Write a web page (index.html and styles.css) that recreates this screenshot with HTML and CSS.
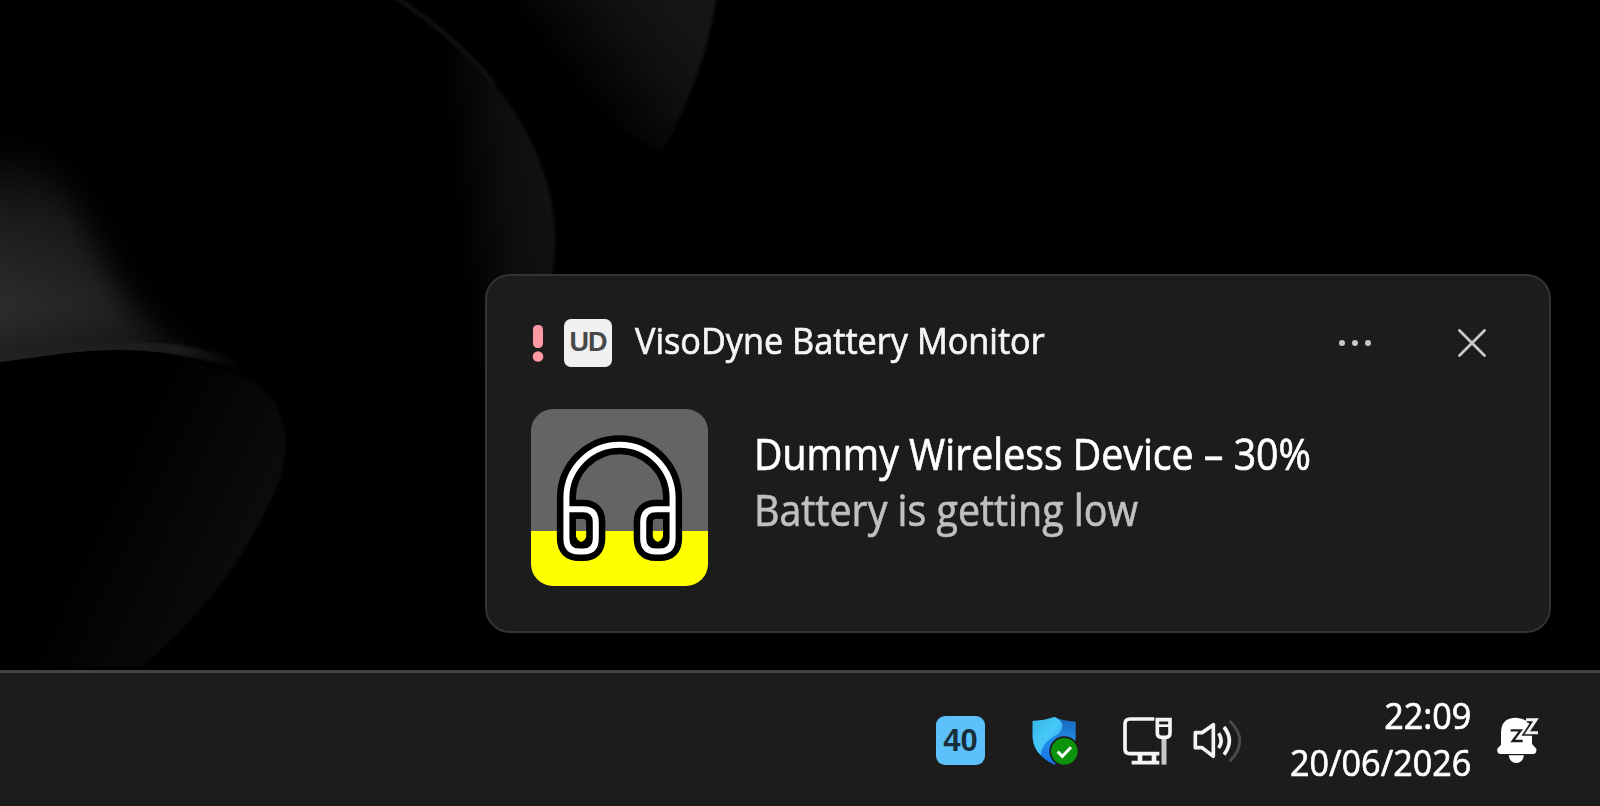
FILE: index.html
```html
<!DOCTYPE html>
<html lang="en">
<head>
<meta charset="utf-8">
<title>Desktop</title>
<link rel="stylesheet" href="styles.css">
</head>
<body>
<main class="desktop">
  <svg class="wallpaper" viewBox="0 0 1600 806" aria-hidden="true" color-interpolation-filters="sRGB">
    <defs>
      <linearGradient id="g1" gradientUnits="userSpaceOnUse" x1="455" y1="190" x2="556" y2="180">
        <stop offset="0" stop-color="#000"/><stop offset=".5" stop-color="#0d0d0d"/><stop offset="1" stop-color="#131313"/>
      </linearGradient>
      <linearGradient id="g2" gradientUnits="userSpaceOnUse" x1="600" y1="120" x2="700" y2="40">
        <stop offset="0" stop-color="#000"/><stop offset=".6" stop-color="#0f0f0f"/><stop offset="1" stop-color="#151515"/>
      </linearGradient>
      <linearGradient id="g3" gradientUnits="userSpaceOnUse" x1="20" y1="140" x2="30" y2="350">
        <stop offset="0" stop-color="#000"/><stop offset=".35" stop-color="#1b1b1b"/><stop offset=".83" stop-color="#2e2e2e"/><stop offset="1" stop-color="#1e1e1e"/>
      </linearGradient>
      <linearGradient id="shade" gradientUnits="userSpaceOnUse" x1="0" y1="0" x2="200" y2="0">
        <stop offset="0" stop-color="#000" stop-opacity="0"/><stop offset=".6" stop-color="#000" stop-opacity=".25"/><stop offset="1" stop-color="#000" stop-opacity=".4"/>
      </linearGradient>
      <linearGradient id="g4" gradientUnits="userSpaceOnUse" x1="110" y1="480" x2="255" y2="550">
        <stop offset="0" stop-color="#000"/><stop offset="1" stop-color="#0c0c0c"/>
      </linearGradient>
      <linearGradient id="g5" gradientUnits="userSpaceOnUse" x1="0" y1="0" x2="240" y2="0">
        <stop offset="0" stop-color="#222"/><stop offset=".75" stop-color="#1b1b1b"/><stop offset="1" stop-color="#000"/>
      </linearGradient>
      <filter id="b1" x="-30%" y="-30%" width="160%" height="160%"><feGaussianBlur stdDeviation="15"/></filter>
      <filter id="b2"><feGaussianBlur stdDeviation="1.5"/></filter>
      <clipPath id="c1"><path d="M0 0H320V410Q240 366 178 355Q127 346 66 353L0 362Z"/></clipPath>
    </defs>
    <path fill="url(#g2)" filter="url(#b2)" d="M510-5H717Q706 72 663 150Q600 135 510-5Z"/>
    <path fill="url(#g1)" filter="url(#b2)" d="M395-3Q454 35 495 85C535 135 556 190 555 243Q554 320 500 370H400Z"/>
    <path fill="none" stroke="#121212" stroke-width="4" filter="url(#b2)" d="M395-3Q454 35 495 85"/>
    <g clip-path="url(#c1)">
      <path fill="url(#g3)" filter="url(#b1)" d="M-60 120Q45 150 72 200T117 286Q150 335 205 366L150 400H-60Z"/>
      <path fill="url(#shade)" d="M0 100H320V400H0Z"/>
      <path fill="none" stroke="url(#g5)" stroke-width="10" filter="url(#b2)" d="M0 359L66 350Q127 342 178 350T240 370"/>
    </g>
    <path fill="url(#g4)" filter="url(#b2)" d="M0 367L66 358Q127 350 178 360Q255 372 275 403Q299 450 268 505Q230 590 143 666H0Z"/>
  </svg>

  <section class="stage">
    <article class="toast">
      <header class="toast-head">
        <svg class="alert" width="12" height="38" viewBox="0 0 12 38"><rect x="1" y="0" width="10" height="23" rx="4.5"/><circle cx="6" cy="31.5" r="5.3"/></svg>
        <span class="app-badge">UD</span>
        <span class="app-name"><span class="fit">VisoDyne Battery Monitor</span></span>
        <svg class="more" width="34" height="10" viewBox="0 0 34 10"><circle cx="4" cy="5" r="3"/><circle cx="17" cy="5" r="3"/><circle cx="30" cy="5" r="3"/></svg>
        <svg class="close" width="28" height="28" viewBox="0 0 28 28"><path d="M1.5 1.5L26.5 26.5M26.5 1.5L1.5 26.5"/></svg>
      </header>
      <div class="toast-body">
        <svg class="device" viewBox="0 0 530 530">
          <clipPath id="tile"><rect width="530" height="530" rx="66"/></clipPath>
          <g clip-path="url(#tile)"><path fill="#646464" d="M0 0H530V365H0Z"/><path fill="#ff0" d="M0 365H530V530H0Z"/></g>
          <g fill="none" stroke-linejoin="round">
            <path stroke="#000" stroke-width="57" d="M106 300V266A159 159 0 0 1 424 266V300M106 300H156Q194 300 194 338V388Q194 427 156 427H144Q106 427 106 388ZM424 300H374Q336 300 336 338V388Q336 427 374 427H386Q424 427 424 388Z"/>
            <path stroke="#fff" stroke-width="18" d="M106 300V266A159 159 0 0 1 424 266V300M106 300H156Q194 300 194 338V388Q194 427 156 427H144Q106 427 106 388ZM424 300H374Q336 300 336 338V388Q336 427 374 427H386Q424 427 424 388Z"/>
            <path stroke="#000" stroke-width="8" d="M130 325H155Q171 327 171 345V380Q164 400 150 402Q136 400 130 380ZM400 325H375Q359 327 359 345V380Q366 400 380 402Q394 400 400 380Z"/>
          </g>
        </svg>
        <div class="message">
          <p class="title"><span class="fit">Dummy Wireless Device – 30%</span></p>
          <p class="detail"><span class="fit">Battery is getting low</span></p>
        </div>
      </div>
    </article>
  </section>

  <footer class="taskbar">
    <span class="level">40</span>
    <svg class="shield" width="48" height="50" viewBox="360 72 144 150">
      <defs>
        <linearGradient id="s1" x1="0" y1="0" x2="1" y2="1"><stop offset="0" stop-color="#35b6e6"/><stop offset=".5" stop-color="#46c8f8"/><stop offset="1" stop-color="#2a9df0"/></linearGradient>
        <linearGradient id="s2" x1="0" y1="0" x2="0" y2="1"><stop offset="0" stop-color="#1668b8"/><stop offset=".5" stop-color="#2389e8"/><stop offset="1" stop-color="#1673e6"/></linearGradient>
      </defs>
      <path fill="url(#s2)" d="M368 90Q405 88 433 78Q461 90 497 92V140Q494 190 433 221Q372 192 368 140Z"/>
      <path fill="url(#s1)" d="M368 90Q405 88 433 78Q455 86 457 105Q456 126 425 141Q394 160 392 193Q370 170 368 140Z"/>
      <circle cx="463" cy="181" r="45" fill="#1c1c1c"/><circle cx="463" cy="181" r="40" fill="#0b930b"/>
      <path d="M443 182L457 196L483 169" fill="none" stroke="#fff" stroke-width="9"/>
    </svg>
    <svg class="network" width="50" height="52" viewBox="68 74 150 156" fill="none" stroke="#f4f4f4" stroke-width="11">
      <path d="M165 86H92Q77 86 77 101V176Q77 190 92 190H180M97 217H180"/><path stroke-width="14" d="M122 190V218M164 190V218"/>
      <path stroke="#c8c8c8" stroke-width="15" d="M194 142V223"/>
      <path d="M174 88H212V128Q212 141 199 141H187Q174 141 174 128Z"/><path stroke-width="8" d="M175 106H210"/>
    </svg>
    <svg class="volume" width="52" height="44" viewBox="278 86 156 132" fill="none" stroke="#f4f4f4" stroke-width="11">
      <path stroke-linejoin="round" d="M288 127H308L342 103V198L308 172H288Z"/>
      <path d="M358 129Q373 151 358 173M374 110Q406 151 374 193"/><path stroke="#4a4a4a" stroke-width="9" d="M391 92Q452 151 391 213"/>
    </svg>
    <time class="clock"><span class="fit">22:09</span><span class="fit">20/06/2026</span></time>
    <svg class="bell" width="44" height="48" viewBox="676 172 132 144">
      <path fill="#fff" d="M680 270L691 258V222Q691 177 737 177Q784 180 784 225V256L797 270Q799 286 787 286H690Q678 286 680 270ZM714 290H760Q756 313 737 313Q718 313 714 290Z"/>
      <g fill="none"><path stroke="#1c1c1c" stroke-width="19" d="M768 182H796L770 222H800"/><path stroke="#f2f2f2" stroke-width="9" d="M766 183H796L770 222H802"/>
      <path stroke="#1c1c1c" stroke-width="7" d="M720 215H750L726 247H756"/></g>
    </svg>
  </footer>
</main>
</body>
</html>
```
FILE: styles.css
```css
* { box-sizing: border-box; }
body { margin: 0; background: #000; font-family: "Open Sans", "Noto Sans", sans-serif; }
p { margin: 0; }
svg { display: block; flex: none; }

.desktop { position: relative; width: 1600px; height: 806px; display: flex; flex-direction: column; overflow: hidden; background: #000; }
.wallpaper { position: absolute; inset: 0; width: 1600px; height: 806px; }
.fit { display: inline-block; white-space: nowrap; transform-origin: 0 50%; -webkit-text-stroke: .7px currentColor; }

.stage { position: relative; flex: 1; display: flex; justify-content: flex-end; align-items: flex-end; padding: 0 49px 37px 0; }
.toast { width: 1066px; height: 359px; border: 2px solid #333; border-radius: 25px; background: #1c1c1c; padding: 42px 63px 0 44px; }
.toast-head { display: flex; align-items: center; height: 49px; }
.alert { margin-left: 1px; margin-top: 3px; fill: #ff99a4; }
.app-badge { margin-left: 20px; width: 48px; height: 48px; border-radius: 7px; background: #f0f0f0; color: #484848; display: flex; justify-content: center; align-items: center; font: bold 27px/1 "Liberation Sans", sans-serif; letter-spacing: -1px; }
.app-name { flex: 1; margin-left: 23px; margin-top: -5px; font-size: 36.5px; line-height: 48px; color: #f5f5f5; }
.app-name .fit { transform: scaleX(.938); }
.more { margin-top: 1px; margin-right: 86px; fill: #c8c8c8; }
.close { margin-top: 1px; fill: none; stroke: #c8c8c8; stroke-width: 2.8; stroke-linecap: round; }

.toast-body { display: flex; margin-top: 42px; }
.device { width: 177px; height: 177px; }
.message { margin-left: 46px; margin-top: 17px; font-size: 43px; line-height: 56px; color: #fff; }
.title .fit { transform: scaleX(.9126); }
.detail .fit { transform: scaleX(.916); }
.detail { color: #c0c0c0; }

.taskbar { position: relative; flex: none; height: 136px; background: #1c1c1c; border-top: 3px solid #434343; display: flex; justify-content: flex-end; padding: 43px 60px 0 0; }
.level { width: 49px; height: 49px; border-radius: 9px; background: #5cc1fa; color: #182c3a; display: flex; align-items: center; justify-content: center; font: bold 31px/1 "Liberation Sans", sans-serif; }
.shield { margin-left: 45px; margin-top: -1px; }
.network { margin-left: 44px; margin-top: -1px; }
.volume { margin-left: 20px; margin-top: 3px; }
.clock { width: 227px; margin-top: -25px; display: flex; flex-direction: column; align-items: flex-end; font-size: 37px; line-height: 47px; color: #fff; }
.clock .fit { transform-origin: 100% 50%; transform: scaleX(.924); }
.bell { margin-left: 25px; }
```
